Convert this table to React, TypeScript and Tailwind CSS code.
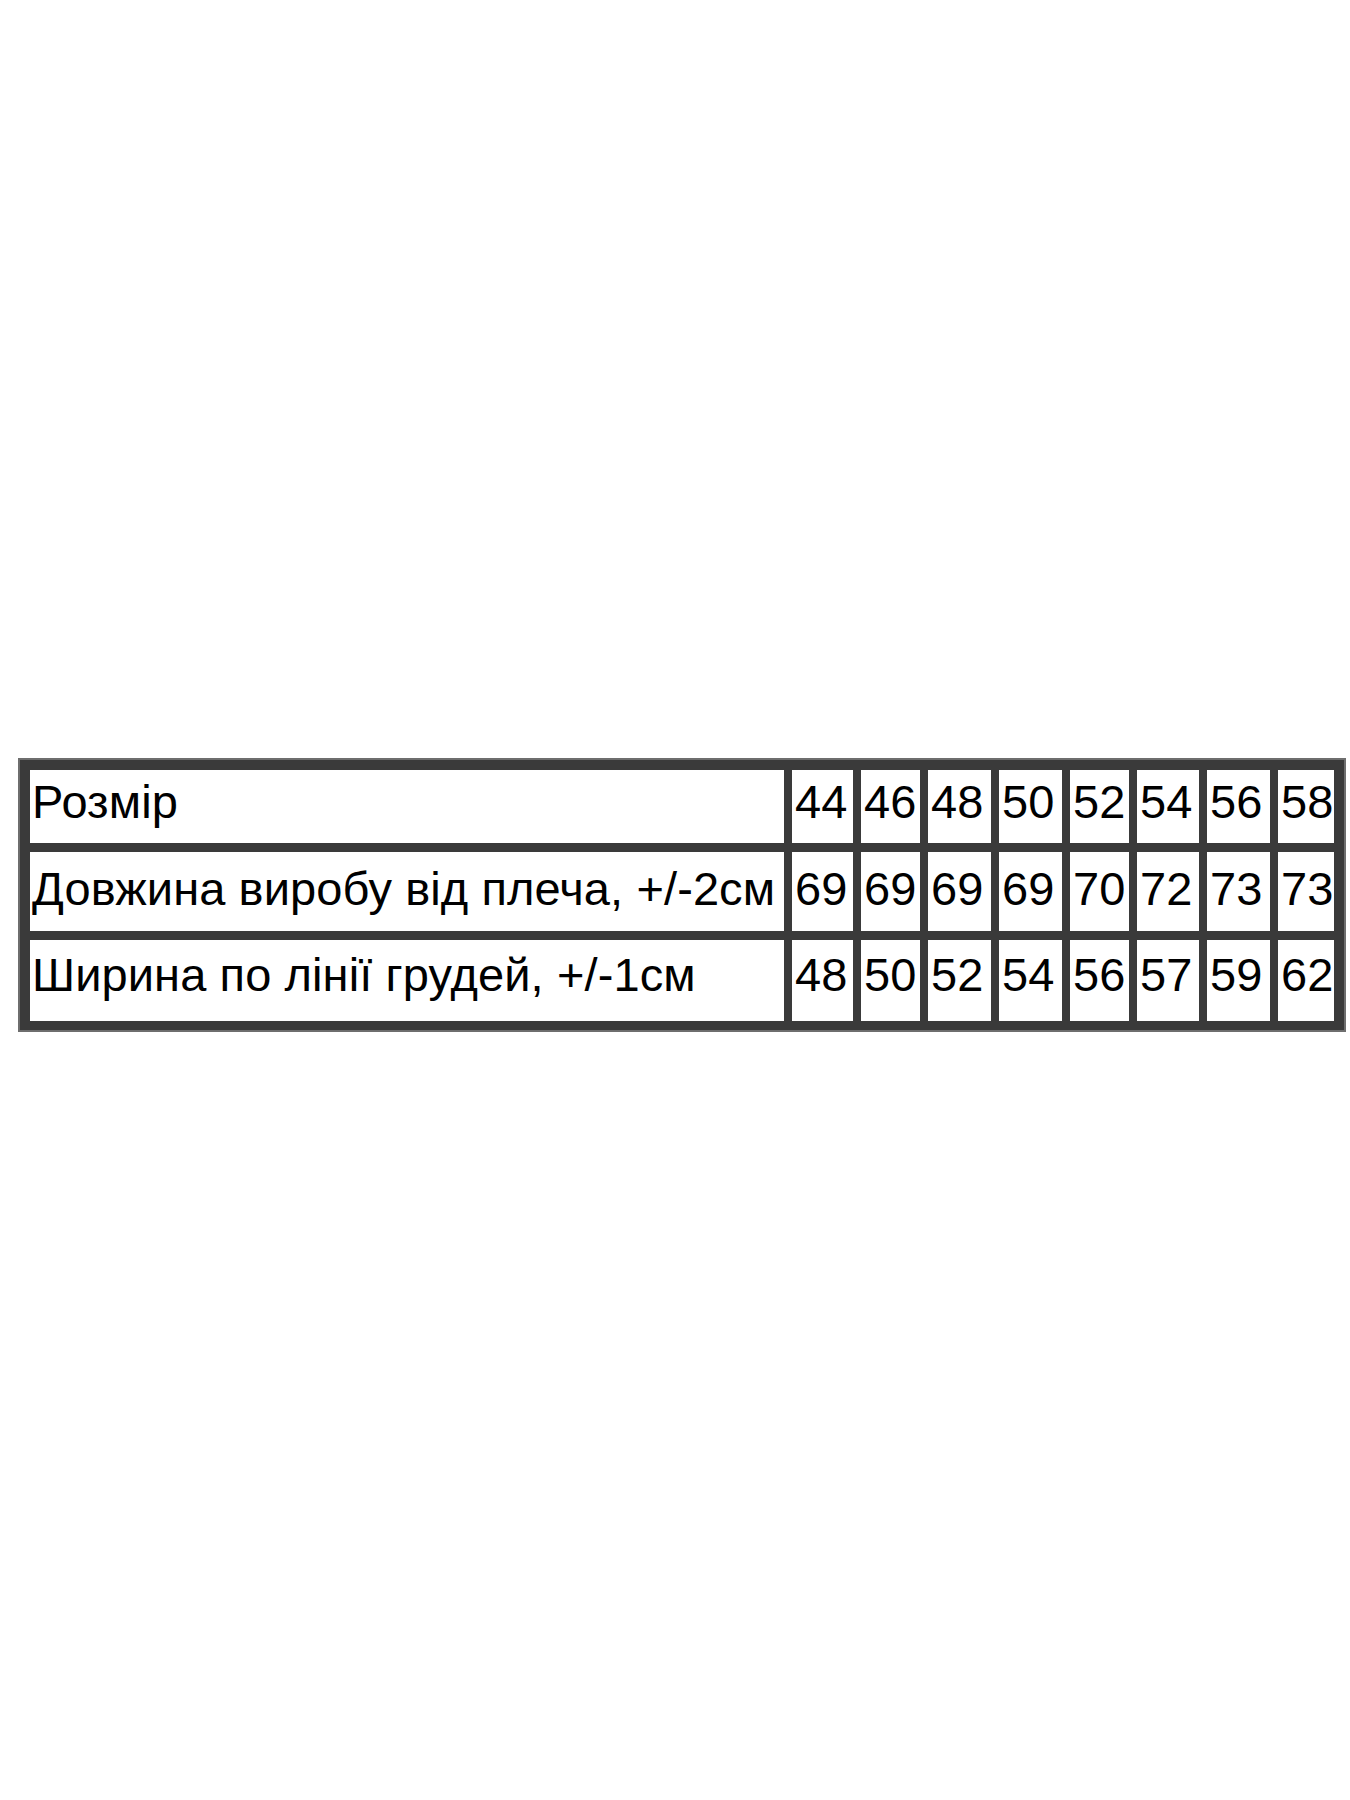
import React from "react";

const sizes = ["44", "46", "48", "50", "52", "54", "56", "58"];
const rows: { label: string; values: string[]; pt: string }[] = [
  { label: "Розмір", values: sizes, pt: "pt-[8px]" },
  {
    label: "Довжина виробу від плеча, +/-2см",
    values: ["69", "69", "69", "69", "70", "72", "73", "73"],
    pt: "pt-[13px]",
  },
  {
    label: "Ширина по лінії грудей, +/-1см",
    values: ["48", "50", "52", "54", "56", "57", "59", "62"],
    pt: "pt-[11px]",
  },
];

export default function App() {
  return (
    <div className="w-[1350px] h-[1800px] bg-white overflow-hidden" style={{ fontFamily: '"Liberation Sans", Arial, sans-serif' }}>
      <div className="pt-[758px] pl-[18px]">
        <div className="inline-block border-2 border-[#6e6e6e] bg-[#3a3a3a] pt-[10px] pb-[9px] px-[10px]">
          <div className="grid grid-cols-[754px_61px_59px_63px_63px_59px_62px_63px_56px] grid-rows-[73px_79px_81px] gap-x-[8px] gap-y-[9px]">
            {rows.map((r, i) => (
              <React.Fragment key={i}>
                <div className={`bg-white text-black text-[47px] leading-none tracking-[0.1px] whitespace-nowrap overflow-hidden pl-[2px] ${r.pt}`}>
                  {r.label}
                </div>
                {r.values.map((v, j) => (
                  <div key={j} className={`bg-white text-black text-[47px] leading-none whitespace-nowrap overflow-hidden pl-[3px] ${r.pt}`}>
                    {v}
                  </div>
                ))}
              </React.Fragment>
            ))}
          </div>
        </div>
      </div>
    </div>
  );
}
